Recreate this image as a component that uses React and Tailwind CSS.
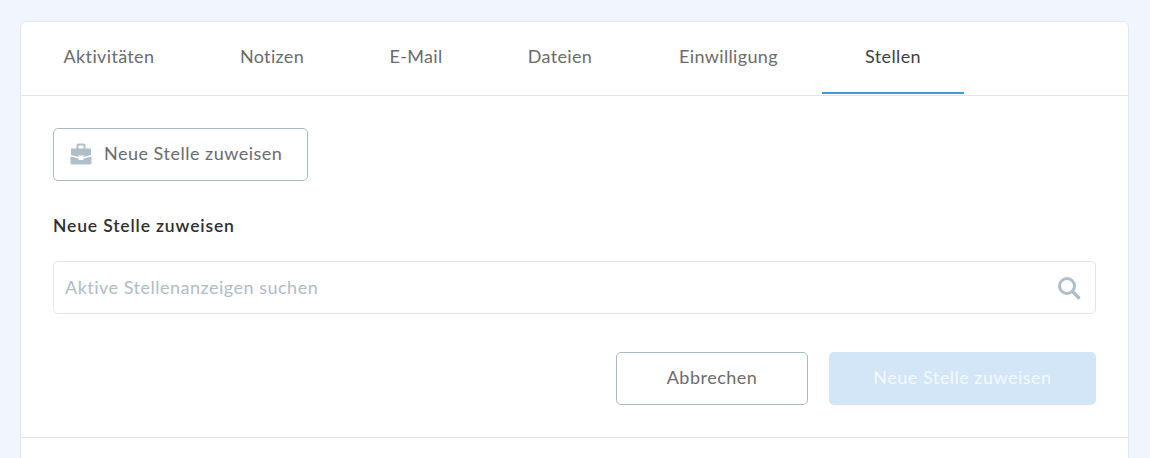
function Tab({ children, width, active }) {
  return (
    <div
      className={
        active
          ? `${width} h-[72px] flex items-center justify-center border-b-2 border-[#4299dc] text-[#3f3f3f] pb-[1px]`
          : `${width} h-[72px] flex items-center justify-center text-[#6b6b6b] pb-[3px]`
      }
    >
      {children}
    </div>
  );
}

function BriefcaseIcon() {
  return (
    <svg width="22" height="22" viewBox="0 0 22 22" fill="#aebfca">
      <path d="M6.500 6V2.800C6.500 1.600 7.400.6 8.600.6h4.800c1.200 0 2.100 1 2.100 2.200V6h-2V3c0-.3-.2-.5-.5-.5H9c-.3 0-.5.2-.5.5v3z" />
      <path d="M2 5.500h18c.6 0 1 .5 1 1.100v5.400l-7.500 2v-1.500h-5V14L1 12V6.600c0-.6.4-1.100 1-1.100z" />
      <path d="M.5 13.400l8 2.100v1.500h5v-1.500l8-2.100v6.300c0 1-.8 1.800-1.800 1.800H2.300c-1 0-1.800-.8-1.800-1.800z" />
    </svg>
  );
}

function SearchIcon() {
  return (
    <svg width="24" height="24" viewBox="0 0 24 24" fill="none" stroke="#aebfca" strokeWidth="3">
      <circle cx="10" cy="10" r="7.500" />
      <path d="M15.500 15.500l6 6" strokeLinecap="round" strokeWidth="3.600" />
    </svg>
  );
}

export default function App() {
  return (
    <div
      className="h-[458px] overflow-hidden bg-[#f1f5fd] px-5 pt-[21px] text-[18px] tracking-[0.5px]"
      style={{ fontFamily: '"Lato", "Noto Sans", sans-serif' }}
    >
      <div className="w-[1109px] h-[500px] bg-white border border-[#e1e6ee] rounded-md">
        <div className="flex border-b border-[#e1e6ee] h-[73px] box-content tracking-[0.35px]">
          <Tab width="w-[176px]">Aktivitäten</Tab>
          <Tab width="w-[150px]">Notizen</Tab>
          <Tab width="w-[138px]">E-Mail</Tab>
          <Tab width="w-[150px]">Dateien</Tab>
          <Tab width="w-[187px]">Einwilligung</Tab>
          <Tab width="w-[142px]" active>Stellen</Tab>
        </div>
        <div className="px-8 pt-8 pb-8 border-b border-[#e3e5e9]">
          <button className="w-[255px] h-[53px] flex items-center gap-[12px] pl-[16px] pb-[2px] border border-[#a9bac6] rounded-[5px] text-[#6b6b6b]">
            <BriefcaseIcon />
            Neue Stelle zuweisen
          </button>
          <div className="mt-[32px] h-[26px] leading-[26px] font-semibold text-[#2f2f2f] tracking-[0.85px] text-[17.500px]">Neue Stelle zuweisen</div>
          <div className="mt-[22px] w-[1043px] h-[53px] flex items-center justify-between pl-[11px] pr-[14px] border border-[#e3e5e9] rounded-[5px]">
            <span className="text-[#afbcc6]">Aktive Stellenanzeigen suchen</span>
            <SearchIcon />
          </div>
          <div className="mt-[38px] w-[1043px] flex justify-end gap-[21px]">
            <button className="w-[192px] h-[53px] pb-[2px] border border-[#a9bac6] rounded-[5px] text-[#6b6b6b]">Abbrechen</button>
            <button className="w-[267px] h-[53px] pb-[2px] bg-[#d2e6f7] rounded-[5px] text-[#f4f9fd]">Neue Stelle zuweisen</button>
          </div>
        </div>
      </div>
    </div>
  );
}
